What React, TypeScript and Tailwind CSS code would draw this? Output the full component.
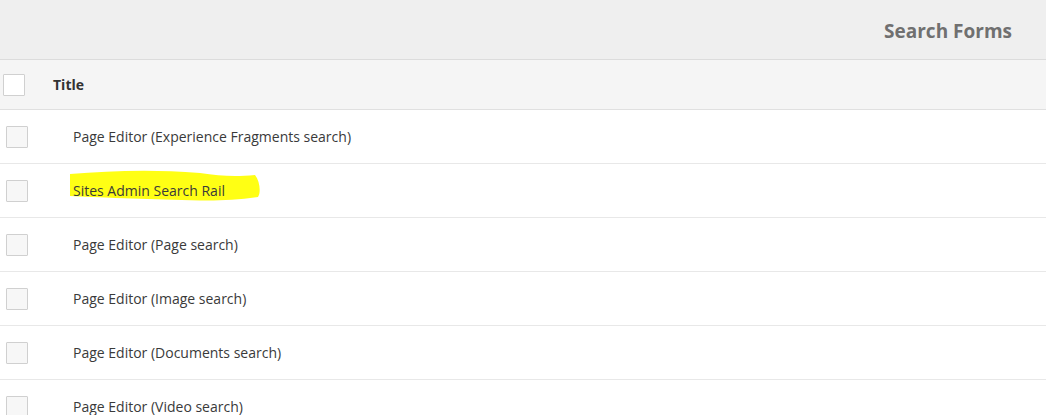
import React from "react";

const rows = [
  "Page Editor (Experience Fragments search)",
  "Sites Admin Search Rail",
  "Page Editor (Page search)",
  "Page Editor (Image search)",
  "Page Editor (Documents search)",
  "Page Editor (Video search)",
];

const Box: React.FC<{ className?: string }> = ({ className }) => (
  <div className={`w-[22px] h-[22px] border border-[#d0d0d0] bg-[#f7f7f7] rounded-[1px] ${className || ""}`} />
);

const App: React.FC = () => {
  return (
    <div className="w-[1046px] h-[415px] overflow-hidden bg-white font-['Open_Sans',sans-serif] text-[#4b4b4b]">
      <div className="h-[60px] bg-[#efefef] border-b border-[#dcdcdc] flex items-center justify-end pr-[34px] pt-[3px]">
        <span className="text-[19px] font-bold text-[#707070]">Search Forms</span>
      </div>

      <div className="h-[50px] bg-[#f5f5f5] border-b border-[#e0e0e0] flex items-center">
        <Box className="ml-[3px] bg-white" />
        <span className="ml-[28px] text-[14px] font-bold text-[#323232]">Title</span>
      </div>

      {rows.map((title, i) => (
        <div key={i} className="h-[54px] border-b border-[#e8e8e8] flex items-center relative">
          <Box className="ml-[6px]" />
          {i === 1 && (
            <svg className="absolute left-0 top-0" width="300" height="54" viewBox="0 109 300 54">
              <path
                d="M70 173 C110 170 150 168 200 172 C220 175 235 176 255 174 C260 180 261 192 258 196 C240 199 215 200 200 199.5 C150 198 110 197 70 195 Z"
                transform="translate(0 -54)"
                fill="#ffff14"
              />
            </svg>
          )}
          <span className="relative ml-[45px] text-[14px] text-[#3a3a3a]">{title}</span>
        </div>
      ))}
    </div>
  );
};

export default App;
